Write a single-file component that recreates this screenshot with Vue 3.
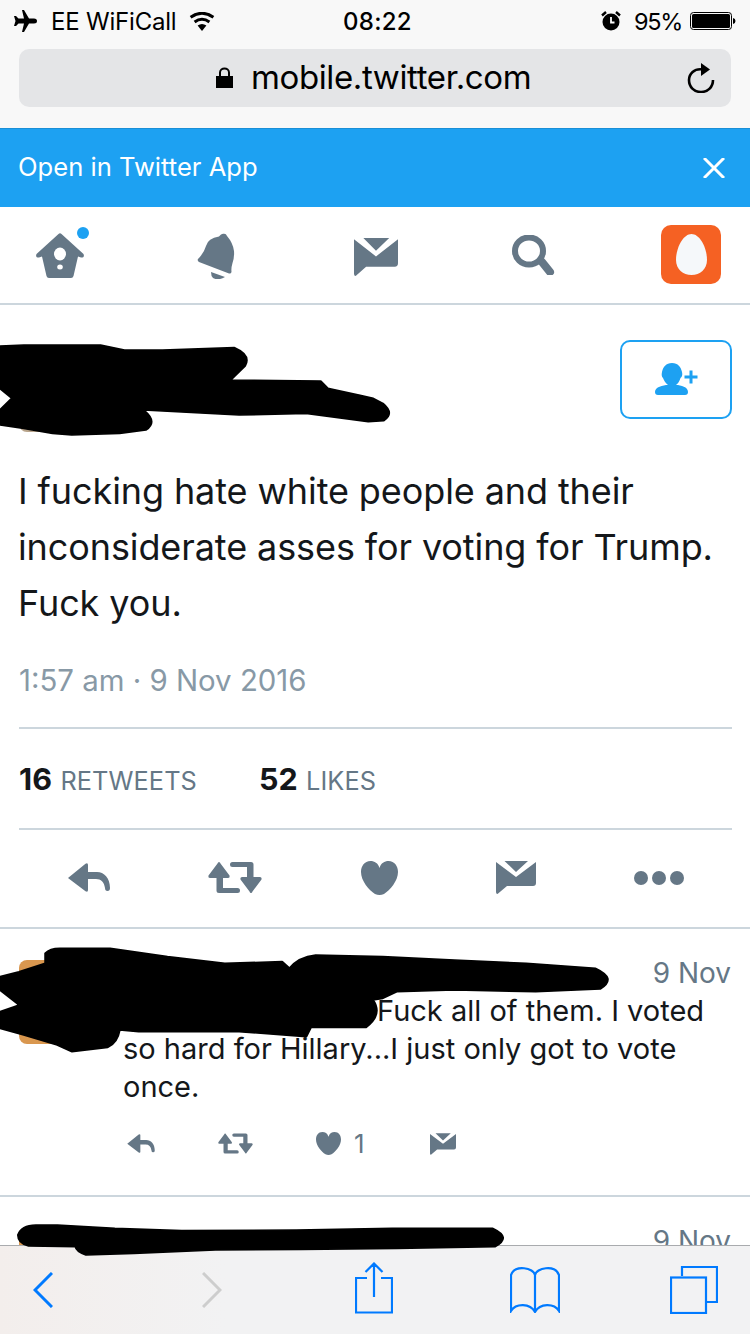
<script setup>
const icons = {
  reply: 'M0 15 L17.5 .8 Q20 -.5 20 2 V9 H29 C36 9 42 15 42 25 Q42 28 39.5 28 Q37 28 37 25 C36 19 33 16 28 16 H20 V27 Q20 29.5 17.5 28.2 Z',
  heart: 'M18.5 7 C17 2 13.5 0 9.5 0 C3.5 0 0 5 0 11 C0 20 8 29 14 33 Q18.5 35 23 33 C29 29 37 20 37 11 C37 5 33.5 0 27.5 0 C23.5 0 20 2 18.5 7Z',
  mail: 'M8.5 0 H32 L20 11 Z M0 1 L20 16 L40 1 V22 Q40 25 37 25 H11 L1.5 33 Q0 33 0 31 Z',
  rt: 'M11 0 Q12 0 12.5 1.5 L21.5 13.5 Q22 16 20 16 H15 V26 H29.5 Q32 26 32 28.5 Q32 31 29.5 31 H11 Q8.5 31 8.5 28.5 V16 H2 Q0 16 .5 13.5 L9.5 1.5 Q10 0 11 0Z'
}
</script>

<template>
  <div class="page">
    <header class="chrome">
      <div class="status">
        <div class="status-left">
          <svg class="plane" viewBox="0 0 24 22"><path d="M9 0 H11 L16 8.5 H21 Q24 8.5 24 11 Q24 13.5 21 13.5 H16 L11 22 H9 L11 13.5 H5.5 L3 16 H1 L2.5 11 L1 6 H3 L5.5 8.5 H11 Z" /></svg>
          <span class="carrier">EE WiFiCall</span>
          <svg class="wifi" viewBox="0 0 26 19"><path d="M13 19 L8.6 13.6 Q13 10.4 17.4 13.6 Z" /><path d="M5.6 10 Q13 4.6 20.4 10 M1.6 5.2 Q13 -2.6 24.4 5.2" fill="none" stroke="#000" stroke-width="3" /></svg>
        </div>
        <span class="time">08:22</span>
        <div class="status-right">
          <svg class="alarm" viewBox="0 0 20 20"><circle cx="10" cy="11" r="8.5" /><path d="M1 4.5 L5 1 M19 4.5 L15 1" stroke="#000" stroke-width="2.4" /><path d="M10 6 V11.5 H13.5" stroke="#fff" stroke-width="1.8" fill="none" /></svg>
          <span class="pct">95%</span>
          <svg class="battery" viewBox="0 0 46 18"><rect x=".5" y=".5" width="41" height="17" rx="3" fill="none" stroke="#000" /><rect x="2" y="2" width="38" height="14" rx="1.5" /><path d="M43 6 Q45.5 6.5 45.5 9 Q45.5 11.5 43 12 Z" /></svg>
        </div>
      </div>
      <div class="urlbar">
        <div class="url">
          <svg class="lock" viewBox="0 0 17 21"><path d="M0 9 H17 V21 H0 Z" /><path d="M4 10 V5.5 C4 .2 13 .2 13 5.5 V10" fill="none" stroke="#000" stroke-width="2" /></svg>
          <span>mobile.twitter.com</span>
        </div>
        <svg class="reload" viewBox="0 0 28 30"><path d="M16 6.5 C7 5 2 11 2 17 C2 24 7 29 14 29 C21 29 26 24 26 17" fill="none" stroke="#000" stroke-width="2.6" /><path d="M14 0 L23 6.5 L14 13 Z" /></svg>
      </div>
    </header>

    <div class="banner">
      <span>Open in Twitter App</span>
      <svg class="close" viewBox="0 0 22 20"><path d="M1 0 L21 20 M21 0 L1 20" stroke="#fff" stroke-width="3" /></svg>
    </div>

    <nav class="nav">
      <svg class="i-home" viewBox="0 0 60 46">
        <path fill="#657786" d="M22.500 1 Q24 -.5 25.500 1 L47.500 21 Q49 24.500 45 24.500 L42 23.500 L37.500 43 Q37 45 35 45 H13 Q11 45 10.500 43 L6 23.500 L3 24.500 Q-1 24.500 .5 21 Z" />
        <ellipse cx="24" cy="21" rx="6" ry="6.500" fill="#fff" />
        <ellipse cx="24" cy="34" rx="2.800" ry="2.500" fill="#fff" />
      </svg>
      <svg class="i-bell" viewBox="0 0 38 46">
        <path fill="#657786" d="M26 .8 Q29 0 30 3 Q36 10 37 18 Q37.500 24 35.500 30 Q34 35 34.500 39 Q34 41 32 40.500 L2 29 Q0 27.500 1 26 Q7 20 9 13 Q11 5 22 3.500 Q24 .8 26 .8 Z" />
        <path fill="#657786" d="M14 39 L28 44 Q21 48 16 45 Q14 43 14 39 Z" />
      </svg>
      <svg class="i-mail" viewBox="0 0 40 33" preserveAspectRatio="none"><path fill="#657786" :d="icons.mail" /></svg>
      <svg class="i-search" viewBox="0 0 43 40">
        <ellipse cx="17" cy="16" rx="14" ry="13.500" fill="none" stroke="#657786" stroke-width="6" />
        <path d="M30 27 L38 37" stroke="#657786" stroke-width="8" stroke-linecap="round" />
      </svg>
      <div class="egg-box">
        <svg class="egg" viewBox="0 0 31 41"><path fill="#f5f8fa" d="M15.500 0 C24 0 31 14 31 26 C31 35 24 41 15.500 41 C7 41 0 35 0 26 C0 14 7 0 15.500 0Z" /></svg>
      </div>
      <span class="notif"></span>
    </nav>

    <main class="content">
      <article class="tweet">
        <div class="tweet-head">
          <div class="avatar"></div>
          <button class="follow">
            <svg class="follow-icon" viewBox="0 0 34 33">
              <path fill="#1da1f2" d="M17 0 C23 0 26 4 27 9 Q28 13 25.500 15 Q24 20 21 22 C26 22 33 24 33 29 Q33 32 30 32 H3 Q0 32 0 29 C0 24 8 22 13 22 C10 20 9 17 8 15 Q6 13 7 9 C8 4 11 0 17 0Z" />
              <path d="M36 7.500 V20.500 M29.500 14 H42.500" stroke="#1da1f2" stroke-width="3" />
            </svg>
          </button>
        </div>
        <p class="tweet-text">I fucking hate white people and their inconsiderate asses for voting for Trump. Fuck you.</p>
        <div class="tweet-date">1:57 am · 9 Nov 2016</div>
        <div class="stats">
          <span class="stat"><b>16</b> RETWEETS</span>
          <span class="stat"><b>52</b> LIKES</span>
        </div>
        <div class="actions">
          <svg class="a-reply" viewBox="0 0 42 29"><path fill="#657786" :d="icons.reply" /></svg>
          <svg class="a-rt" viewBox="0 0 54 31"><path fill="#657786" :d="icons.rt" /><path fill="#657786" :d="icons.rt" transform="rotate(180 27 15.500)" /></svg>
          <svg class="a-heart" viewBox="0 0 37 34"><path fill="#657786" :d="icons.heart" /></svg>
          <svg class="a-mail" viewBox="0 0 40 33"><path fill="#657786" :d="icons.mail" /></svg>
          <svg class="a-more" viewBox="0 0 50 14"><circle cx="7" cy="7" r="7" fill="#657786" /><circle cx="25" cy="7" r="7" fill="#657786" /><circle cx="43" cy="7" r="7" fill="#657786" /></svg>
        </div>
      </article>

      <section class="reply">
        <div class="reply-avatar"></div>
        <div class="reply-body">
          <div class="reply-head"><span class="reply-date">9 Nov</span></div>
          <p class="reply-text">Fuck all of them. I voted<br>so hard for Hillary...I just only got to vote<br>once.</p>
          <div class="reply-actions">
            <svg class="s-reply" viewBox="0 0 42 29"><path fill="#657786" :d="icons.reply" /></svg>
            <svg class="s-rt" viewBox="0 0 54 31"><path fill="#657786" :d="icons.rt" /><path fill="#657786" :d="icons.rt" transform="rotate(180 27 15.500)" /></svg>
            <svg class="s-heart" viewBox="0 0 37 34"><path fill="#657786" :d="icons.heart" /></svg>
            <span class="s-count">1</span>
            <svg class="s-mail" viewBox="0 0 40 33"><path fill="#657786" :d="icons.mail" /></svg>
          </div>
        </div>
      </section>

      <section class="reply reply-next">
        <div class="reply-avatar"></div>
        <div class="reply-body">
          <div class="reply-head"><span class="reply-date">9 Nov</span></div>
        </div>
      </section>
    </main>

    <footer class="toolbar">
      <svg class="t-back" viewBox="0 0 20 36"><path d="M19 1 L2 18 L19 35" fill="none" stroke="#007aff" stroke-width="3" /></svg>
      <svg class="t-fwd" viewBox="0 0 20 36"><path d="M1 1 L18 18 L1 35" fill="none" stroke="#cdcdcd" stroke-width="3" /></svg>
      <svg class="t-share" viewBox="0 0 38 52"><path d="M12 16 H1 V50.500 H37 V16 H26 M19 35 V2 M10.500 10 L19 1.500 L27.500 10" fill="none" stroke="#007aff" stroke-width="2.200" /></svg>
      <svg class="t-book" viewBox="0 0 50 46"><path d="M25 8 C24 1 5 -3 1 8 V44 C6 36 20 36 25 45 C30 36 44 36 49 44 V8 C45 -3 26 1 25 8 V45" fill="none" stroke="#007aff" stroke-width="2.200" /></svg>
      <svg class="t-tabs" viewBox="0 0 48 48"><path d="M12 10 V1 H47 V36 H37" fill="none" stroke="#007aff" stroke-width="2.200" /><rect x="1" y="11.500" width="35" height="35.500" fill="none" stroke="#007aff" stroke-width="2.200" /></svg>
    </footer>

    <svg class="scribbles" viewBox="0 0 750 1334" aria-hidden="true">
      <g transform="translate(0 330) scale(.4783 .3333)">
        <path d="M0 48 L50 45 L210 45 L260 60 L340 60 L490 53 Q525 75 512 108 L482 150 L670 153 L685 175 L750 195 L780 205 L800 220 Q825 250 802 272 L770 275 L640 250 L500 255 L300 240 Q330 275 305 300 L250 310 L150 315 L110 310 L50 295 L0 285 L0 240 L25 205 L0 175 Z" />
      </g>
      <g transform="translate(0 940) scale(.4783 .3333)">
        <path d="M95 40 Q105 25 125 25 L230 25 L350 50 L470 70 L590 65 L605 85 Q625 50 660 45 L800 50 L950 60 L1100 70 L1245 85 Q1290 115 1255 147 L1120 155 L950 150 L830 155 L800 175 L780 180 Q800 225 765 262 L650 262 L640 290 L500 275 L290 275 L250 270 Q245 310 225 322 L150 335 L120 315 L50 285 L0 265 L0 215 L30 200 L40 195 L0 150 L0 110 L40 95 L95 70 Z" />
      </g>
      <g transform="translate(0 1190) scale(.4783 .3333)">
        <path d="M38 135 Q45 105 75 105 L120 105 L240 115 L380 122 L620 120 L820 115 L1030 115 Q1070 142 1035 170 L830 175 L630 178 L450 180 L280 190 L180 195 Q160 185 158 170 L60 168 Q38 160 38 135 Z" />
      </g>
    </svg>
  </div>
</template>

<style>
html, body { margin: 0; padding: 0; background: #fff; }
</style>

<style scoped>
.page {
  position: relative;
  width: 750px;
  height: 1334px;
  overflow: hidden;
  display: flex;
  flex-direction: column;
  font-family: Inter, "Noto Sans", sans-serif;
  color: #14171a;
  background: #fff;
}
svg { display: block; flex: none; }
p { margin: 0; }

.chrome { height: 128px; background: #f8f8f8; flex: none; }
.status {
  height: 42px;
  position: relative;
  display: flex;
  align-items: center;
  justify-content: space-between;
  padding: 0 14px 0 13px;
  color: #000;
  font-size: 24px;
}
.status-left, .status-right { display: flex; align-items: center; }
.plane { width: 24px; height: 22px; margin-right: 14px; }
.carrier { letter-spacing: -.2px; }
.wifi { width: 26px; height: 19px; margin-left: 13px; }
.time { position: absolute; left: 343px; font-weight: 500; letter-spacing: .3px; }
.alarm { width: 20px; height: 20px; margin-right: 13px; }
.pct { margin-right: 8px; font-size: 23.500px; letter-spacing: -1.300px; }
.battery { width: 46px; height: 18px; }

.urlbar {
  height: 58px;
  margin: 7px 19px 0;
  border-radius: 10px;
  background: #e4e5e7;
  display: flex;
  align-items: center;
  padding-right: 16px;
}
.url {
  flex: 1;
  padding-left: 197px;
  padding-bottom: 2px;
  display: flex;
  align-items: center;
  gap: 18px;
  font-size: 33px;
  letter-spacing: -.38px;
  color: #000;
}
.lock { width: 17px; height: 21px; }
.reload { width: 28px; height: 30px; }

.banner {
  height: 79px;
  flex: none;
  background: #1da1f2;
  border-top: 1px solid #1a8fd6;
  box-sizing: border-box;
  color: #fff;
  display: flex;
  align-items: center;
  justify-content: space-between;
  padding: 0 25px 3px 18px;
  font-size: 25.600px;
}
.close { width: 22px; height: 20px; margin-top: 3px; }

.nav {
  position: relative;
  height: 96px;
  flex: none;
  box-sizing: content-box;
  border-bottom: 2px solid #ccd6dd;
  display: flex;
  align-items: flex-start;
  padding-left: 36px;
}
.i-home { width: 60px; height: 46px; margin-top: 26px; margin-right: 101px; }
.i-bell { width: 38px; height: 46px; margin-top: 26px; margin-right: 119px; }
.i-mail { width: 44px; height: 38px; margin-top: 31px; margin-right: 114px; }
.i-search { width: 43px; height: 40px; margin-top: 28px; margin-right: 106px; }
.egg-box {
  width: 60px; height: 59px; margin-top: 18px;
  background: #f56123;
  border-radius: 10px;
  display: flex; align-items: center; justify-content: center;
}
.egg { width: 31px; height: 41px; }
.notif {
  position: absolute; left: 77px; top: 20px;
  width: 12px; height: 12px; border-radius: 50%;
  background: #1da1f2;
}

.content { flex: 1; min-height: 0; overflow: hidden; }

.tweet { padding: 0 18px 0 19px; }
.tweet-head {
  display: flex; justify-content: space-between; align-items: flex-start;
  padding-top: 35px; height: 113px; box-sizing: border-box;
}
.avatar {
  width: 84px; height: 87px; margin-top: 5px;
  border-radius: 8px;
  background: #b9a58c;
}
.follow {
  width: 112px; height: 79px; padding: 0;
  background: #fff;
  border: 2px solid #1da1f2;
  border-radius: 10px;
  display: flex; align-items: center; justify-content: center;
}
.follow-icon { width: 34px; height: 33px; overflow: visible; margin-right: 8px; }
.tweet-text {
  margin: 45px 0 0 -1px;
  font-size: 36px;
  line-height: 56px;
  letter-spacing: -.1px;
}
.tweet-date {
  margin-top: 30px;
  height: 66px;
  color: #8899a6;
  font-size: 29.400px;
  line-height: 40px;
}
.stats {
  border-top: 2px solid #ccd6dd;
  border-bottom: 2px solid #ccd6dd;
  height: 99px;
  display: flex;
  align-items: center;
  gap: 62px;
  color: #657786;
  font-size: 25.300px;
  letter-spacing: .1px;
}
.stat b { color: #14171a; font-size: 30.500px; font-weight: 700; margin-right: 1px; }
.actions { height: 97px; box-sizing: border-box; padding: 0 0 2px 49px; position: relative; display: flex; align-items: center; }
.a-reply { width: 42px; height: 29px; margin-right: 98px; }
.a-rt { width: 54px; height: 31px; margin-right: 99px; }
.a-heart { width: 37px; height: 34px; margin-right: 98px; }
.a-mail { width: 40px; height: 33px; margin-right: 98px; }
.a-more { width: 50px; height: 14px; }

.reply {
  border-top: 2px solid #ccd6dd;
  height: 266px;
  box-sizing: content-box;
  display: flex;
  padding: 0 19px;
}
.reply-next { height: auto; }
.reply-avatar {
  width: 84px; height: 84px;
  margin-top: 31px; margin-right: 21px; flex: none;
  border-radius: 8px;
  background: #d9974f;
}
.reply-body { flex: 1; min-width: 0; }
.reply-head { display: flex; justify-content: flex-end; padding-top: 26px; height: 63px; box-sizing: border-box; }
.reply-date { color: #657786; font-size: 28px; line-height: 36px; }
.reply-text {
  margin-left: -1px;
  font-size: 29px;
  line-height: 38px;
  text-indent: 254px;
  white-space: nowrap;
}
.reply-actions { display: flex; align-items: center; margin-top: 22px; padding-left: 3px; }
.s-reply { width: 28px; height: 19px; margin-right: 63px; }
.s-rt { width: 35px; height: 21px; margin-right: 63px; }
.s-heart { width: 25px; height: 23px; margin-right: 13px; }
.s-count { color: #657786; font-size: 26px; width: 76px; }
.s-mail { width: 26px; height: 22px; }

.toolbar {
  height: 89px;
  flex: none;
  box-sizing: border-box;
  background: linear-gradient(90deg, #f3eeec, #f2f2f3 30%);
  border-top: 1px solid #a9abae;
  display: flex;
  align-items: flex-start;
  padding-left: 33px;
}
.t-back { width: 20px; height: 36px; margin-top: 26px; margin-right: 149px; }
.t-fwd { width: 20px; height: 36px; margin-top: 26px; margin-right: 133px; }
.t-share { width: 38px; height: 52px; margin-top: 16px; margin-right: 117px; }
.t-book { width: 50px; height: 46px; margin-top: 21px; margin-right: 110px; }
.t-tabs { width: 48px; height: 48px; margin-top: 20px; }

.scribbles { position: absolute; left: 0; top: 0; width: 750px; height: 1334px; pointer-events: none; }
.scribbles path { stroke: #000; stroke-width: 5; stroke-linejoin: round; }
</style>
